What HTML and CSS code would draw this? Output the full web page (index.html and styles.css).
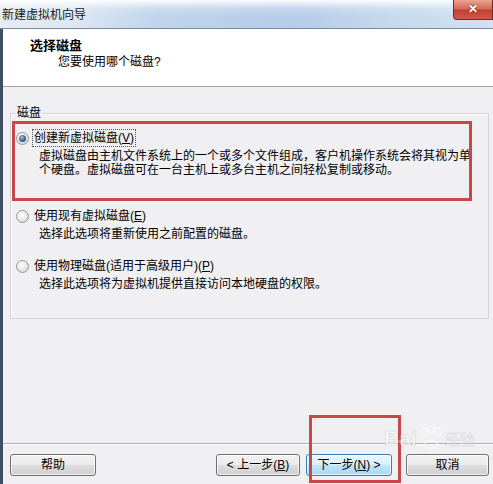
FILE: index.html
```html
<!DOCTYPE html>
<html lang="zh-CN">
<head>
<meta charset="utf-8">
<title>新建虚拟机向导</title>
<link rel="stylesheet" href="styles.css">
</head>
<body>
<div class="window">
  <div class="titlebar">
    <span class="title">新建虚拟机向导</span>
    <span class="close">✕</span>
  </div>
  <div class="frame">
    <div class="header">
      <div class="h-title">选择磁盘</div>
      <div class="h-sub">您要使用哪个磁盘?</div>
    </div>
    <div class="content">
      <fieldset class="group">
        <legend class="legend">磁盘</legend>
        <div class="option">
          <div class="opt-row">
            <span class="radio checked"></span>
            <span class="opt-label focus">创建新虚拟磁盘(<u>V</u>)</span>
          </div>
          <div class="desc desc-tall">虚拟磁盘由主机文件系统上的一个或多个文件组成，客户机操作系统会将其视为单<br>个硬盘。虚拟磁盘可在一台主机上或多台主机之间轻松复制或移动。</div>
        </div>
        <div class="option">
          <div class="opt-row">
            <span class="radio"></span>
            <span class="opt-label">使用现有虚拟磁盘(<u>E</u>)</span>
          </div>
          <div class="desc">选择此选项将重新使用之前配置的磁盘。</div>
        </div>
        <div class="option">
          <div class="opt-row">
            <span class="radio"></span>
            <span class="opt-label">使用物理磁盘(适用于高级用户)(<u>P</u>)</span>
          </div>
          <div class="desc">选择此选项将为虚拟机提供直接访问本地硬盘的权限。</div>
        </div>
      </fieldset>
      <div class="spacer"></div>
      <div class="footer">
        <button class="btn btn-help">帮助</button>
        <div class="spacer-h"></div>
        <button class="btn btn-back">&lt; 上一步(<u>B</u>)</button>
        <button class="btn btn-next">下一步(<u>N</u>) &gt;</button>
        <button class="btn btn-cancel">取消</button>
      </div>
    </div>
  </div>
  <div class="mark mark-1"></div>
  <div class="mark mark-2"></div>
  <div class="watermark">
    <span class="wm-bai">Bai</span>
    <svg class="wm-paw" width="26" height="24" viewBox="0 0 26 24">
      <ellipse cx="6" cy="6" rx="3" ry="4" fill="none" stroke="#fff" stroke-width="1.6"/>
      <ellipse cx="13" cy="4" rx="3" ry="4" fill="none" stroke="#fff" stroke-width="1.6"/>
      <ellipse cx="20" cy="6" rx="3" ry="4" fill="none" stroke="#fff" stroke-width="1.6"/>
      <path d="M6 20 C6 13 20 13 20 20 C20 23 6 23 6 20 Z" fill="none" stroke="#fff" stroke-width="1.6"/>
    </svg>
    <span class="wm-cn">经验</span>
  </div>
</div>
</body>
</html>
```
FILE: styles.css
```css
* { box-sizing: border-box; }
html, body {
  margin: 0;
  padding: 0;
}
body {
  width: 493px;
  height: 484px;
  overflow: hidden;
  font-family: "Liberation Sans", "Noto Sans CJK SC", sans-serif;
  font-size: 12px;
  color: #000;
}
.window {
  position: relative;
  width: 493px;
  height: 484px;
  display: flex;
  flex-direction: column;
  background: #f0eff1;
}
.titlebar {
  height: 29px;
  flex: none;
  display: flex;
  align-items: flex-start;
  border-bottom: 1px solid #7a8aa0;
  background:
    linear-gradient(180deg, rgba(255,255,255,0.95) 0%, rgba(255,255,255,0.2) 30%, rgba(255,255,255,0) 60%),
    linear-gradient(90deg, #e6ecf3 0%, #dde7f2 15%, #bfd4eb 32%, #b6cde8 60%, #c6d9ee 80%, #d3e1f0 100%);
}
.title {
  flex: 1;
  padding: 7px 0 0 2px;
  line-height: 16px;
  font-size: 12px;
  color: #1a1a1a;
}
.close {
  flex: none;
  width: 40px;
  height: 20px;
  border: 1px solid #6b2c2c;
  border-top: none;
  border-radius: 0 0 0 4px;
  background: linear-gradient(180deg, #e9a595 0%, #d56b5a 45%, #c3402f 55%, #d0594a 100%);
  color: #fff;
  font-size: 12px;
  font-weight: bold;
  line-height: 18px;
  text-align: center;
  text-shadow: 0 0 2px #5a1a1a;
}
.frame {
  flex: 1;
  display: flex;
  flex-direction: column;
  border-left: 3px solid #3f4e63;
  min-height: 0;
}
.header {
  height: 58px;
  flex: none;
  background: #fff;
  border-bottom: 1px solid #a3a3a3;
  padding: 9px 0 0 27px;
}
.h-title {
  font-weight: bold;
  font-size: 13px;
  line-height: 16px;
}
.h-sub {
  margin-top: 1px;
  padding-left: 28px;
  line-height: 14px;
}
.content {
  flex: 1;
  display: flex;
  flex-direction: column;
  background: #f0eff1;
}
.group {
  margin: 19px 4px 0 7px;
  padding: 0 0 27px 0;
  border: 1px solid #d3d3d6;
  box-shadow: inset 1px 1px 0 #fff;
  min-width: 0;
}
.legend {
  margin-left: 5px;
  padding: 0 1px;
  line-height: 14px;
}
.option {
  margin-top: 16px;
}
.option:first-of-type {
  margin-top: 9px;
}
.opt-row {
  height: 18px;
  display: flex;
  align-items: center;
  padding-left: 5px;
}
.radio {
  width: 13px;
  height: 13px;
  flex: none;
  border-radius: 50%;
  border: 1px solid #979797;
  background: radial-gradient(circle at 40% 35%, #ffffff 0%, #e6e6e6 55%, #cdcdcd 100%);
  display: flex;
  align-items: center;
  justify-content: center;
}
.radio.checked::after {
  content: "";
  width: 7px;
  height: 7px;
  border-radius: 50%;
  background: radial-gradient(circle at 40% 35%, #9cc2de 0%, #2f5f86 60%, #1c3d5c 100%);
}
.opt-label {
  margin-left: 3px;
  padding: 0 1px;
  line-height: 16px;
  border: 1px dotted transparent;
  white-space: nowrap;
}
.opt-label.focus {
  border-color: #555;
}
.desc {
  margin-top: 2px;
  padding-left: 28px;
  line-height: 14px;
  white-space: nowrap;
}
.desc-tall {
  height: 42px;
}
.spacer { flex: 1; }
.footer {
  flex: none;
  display: flex;
  align-items: flex-start;
  height: 41px;
  padding: 10px 4px 0 7px;
  border-top: 1px solid #b0b0b0;
  box-shadow: inset 0 1px 0 #fbfbfb;
}
.spacer-h { flex: 1; }
.btn {
  height: 22px;
  padding: 0;
  font-family: "Liberation Sans", "Noto Sans CJK SC", sans-serif;
  font-size: 12px;
  line-height: 20px;
  color: #000;
  border: 1px solid #707070;
  border-radius: 3px;
  background: linear-gradient(180deg, #f2f2f2 0%, #ebebeb 48%, #dddddd 52%, #cfcfcf 100%);
  box-shadow: inset 0 0 0 1px rgba(255,255,255,0.7);
  text-align: center;
}
.btn-help { width: 86px; }
.btn-back { width: 84px; }
.btn-next {
  width: 86px;
  margin-left: 6px;
  border-color: #3c7fb1;
  background: linear-gradient(180deg, #eaf6fd 0%, #d9f0fc 48%, #bee6fd 52%, #a7d9f5 100%);
}
.btn-cancel {
  width: 83px;
  margin-left: 14px;
}
.mark {
  position: absolute;
  border: 3px solid #c7474b;
  pointer-events: none;
}
.mark-1 {
  left: 12px;
  top: 121px;
  width: 460px;
  height: 80px;
}
.mark-2 {
  left: 309px;
  top: 415px;
  width: 92px;
  height: 68px;
}
.watermark {
  position: absolute;
  left: 384px;
  top: 426px;
  display: flex;
  align-items: center;
  gap: 1px;
  opacity: 0.6;
  pointer-events: none;
}
.wm-bai {
  font-family: "Liberation Sans", sans-serif;
  font-weight: bold;
  font-size: 21px;
  color: #fff;
  -webkit-text-stroke: 0.6px #c4c4c4;
}
.wm-cn {
  font-size: 15px;
  color: #fff;
  -webkit-text-stroke: 0.4px #c4c4c4;
}
```
